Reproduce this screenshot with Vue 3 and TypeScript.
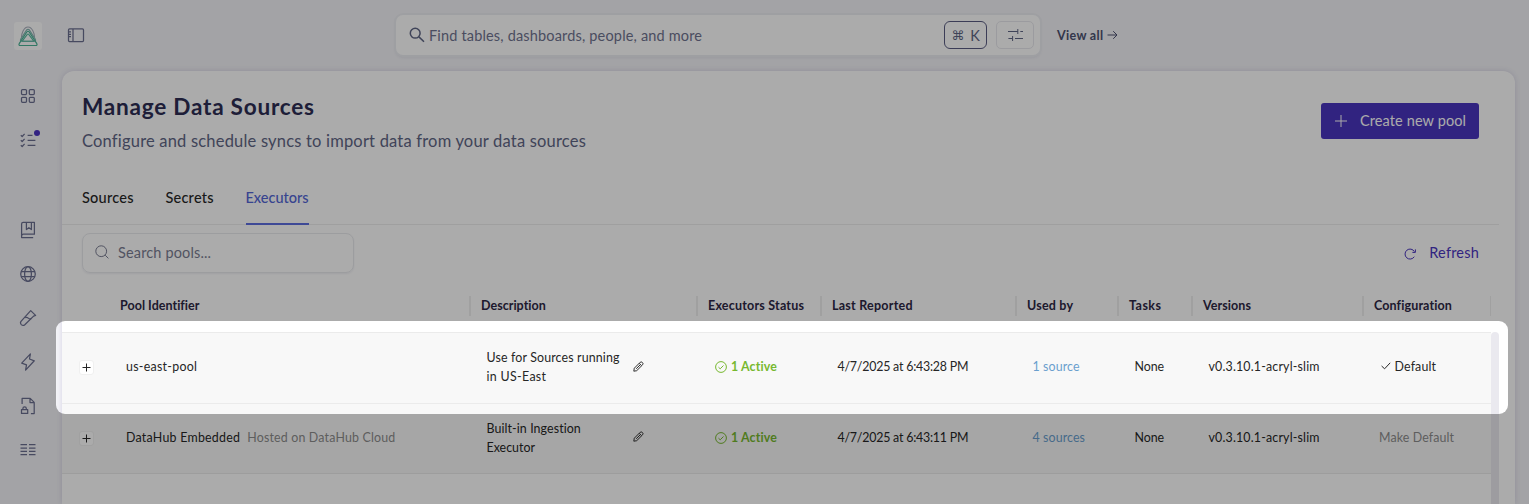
<script setup lang="ts">
import type { Directive } from 'vue'

interface Label { text: string; width: number }
interface PoolRow {
  name: Label
  note?: Label
  description: Label[]
  status: Label
  reported: Label
  sources: Label
  tasks: Label
  version: Label
  isDefault: boolean
  config: Label
}

// Tracks a label out (or in) so that it takes the given width in pixels.
const vFit: Directive<HTMLElement, number> = {
  mounted(el, binding) {
    const count = (el.textContent ?? '').length
    const natural = el.getBoundingClientRect().width
    if (count > 1) el.style.letterSpacing = `${((binding.value - natural) / (count - 1)).toFixed(3)}px`
  },
}

const navTop = ['grid', 'tasks']
const navMain = ['book', 'globe', 'tube', 'bolt', 'file', 'columns']

const tabs = [
  { text: 'Sources', width: 51.5, active: false },
  { text: 'Secrets', width: 48, active: false },
  { text: 'Executors', width: 63, active: true },
]

const headers: Label[] = [
  { text: 'Pool Identifier', width: 79.5 },
  { text: 'Description', width: 65 },
  { text: 'Executors Status', width: 96 },
  { text: 'Last Reported', width: 80.5 },
  { text: 'Used by', width: 46 },
  { text: 'Tasks', width: 32 },
  { text: 'Versions', width: 48 },
  { text: 'Configuration', width: 78 },
]

const rows: PoolRow[] = [
  {
    name: { text: 'us-east-pool', width: 71 },
    description: [{ text: 'Use for Sources running', width: 133 }, { text: 'in US-East', width: 59.5 }],
    status: { text: '1 Active', width: 46 },
    reported: { text: '4/7/2025 at 6:43:28 PM', width: 131 },
    sources: { text: '1 source', width: 47 },
    tasks: { text: 'None', width: 29.5 },
    version: { text: 'v0.3.10.1-acryl-slim', width: 111 },
    isDefault: true,
    config: { text: 'Default', width: 41.5 },
  },
  {
    name: { text: 'DataHub Embedded', width: 114 },
    note: { text: 'Hosted on DataHub Cloud', width: 148 },
    description: [{ text: 'Built-in Ingestion', width: 94.5 }, { text: 'Executor', width: 48.5 }],
    status: { text: '1 Active', width: 46 },
    reported: { text: '4/7/2025 at 6:43:11 PM', width: 131 },
    sources: { text: '4 sources', width: 52.5 },
    tasks: { text: 'None', width: 29.5 },
    version: { text: 'v0.3.10.1-acryl-slim', width: 111 },
    isDefault: false,
    config: { text: 'Make Default', width: 75 },
  },
]
</script>

<template>
  <div class="app">
    <aside class="sidebar">
      <div class="logo">
        <svg width="20" height="22" viewBox="0 0 20 22" fill="none" stroke-width="1.1" stroke-linejoin="round">
          <path d="M3.4 12.5C3.4 9 5.6 2 10 2S16.6 9 16.6 12.5" stroke="#a9b0bd" />
          <path d="M3.6 16.2C2.4 16.2 2.2 15.3 2.6 14.4L8.2 5.6C9.2 4 10.8 4 11.8 5.6L17.4 14.4C17.8 15.3 17.6 16.2 16.4 16.2Z" stroke="#85b5b2" />
          <path d="M2.2 20.5C1 20.5 .7 19.6 1.2 18.7L8.8 7C9.5 6 10.5 6 11.2 7L18.8 18.7C19.3 19.6 19 20.5 17.8 20.5Z" stroke="#4bb396" stroke-width="1.2" />
          <path d="M4.2 16.2L9.1 9.6Q10 8.5 10.9 9.6L15.8 16.2Z" stroke="#58b8a0" />
        </svg>
      </div>
      <nav class="nav">
        <div v-for="n in navTop" :key="n" class="nav-item">
          <svg v-if="n === 'grid'" class="ico" width="16" height="16" viewBox="0 0 16 16">
            <rect x="1.5" y="1.5" width="5" height="5" rx="1" /><rect x="9.3" y="1.5" width="5" height="5" rx="1" />
            <rect x="1.5" y="9.3" width="5" height="5" rx="1" /><rect x="9.3" y="9.3" width="5" height="5" rx="1" />
          </svg>
          <svg v-else class="ico" width="16" height="16" viewBox="0 0 16 16">
            <path d="M.8 3.2L2.2 4.5L4.6 1.9M.8 8.2L2.2 9.5L4.6 6.9M.8 13.2L2.2 14.5L4.6 11.9M7.6 3.3H12.5M7.6 8.3H15.4M7.6 13.4H15.4" />
          </svg>
          <span v-if="n === 'tasks'" class="dot"></span>
        </div>
      </nav>
      <nav class="nav main">
        <div v-for="n in navMain" :key="n" class="nav-item">
          <svg v-if="n === 'book'" class="ico" width="16" height="18" viewBox="0 0 16 18">
            <path d="M1.6 15.2V3Q1.6 1.4 3.2 1.4H14.4V13.2H3.6Q1.6 13.2 1.6 15.2V16.6H13.2M6.4 1.6V8.6L8.9 6.7L11.4 8.6V1.6" />
          </svg>
          <svg v-else-if="n === 'globe'" class="ico" width="16" height="16" viewBox="0 0 16 16">
            <circle cx="8" cy="8" r="7.3" /><ellipse cx="8" cy="8" rx="3.4" ry="7.3" /><path d="M1.2 5.5H14.8M1.2 10.5H14.8" />
          </svg>
          <svg v-else-if="n === 'tube'" class="ico" width="18" height="18" viewBox="0 0 18 18">
            <path d="M11.7 1.6L16.6 6.4L14.6 7.1L5.8 15.7Q4 17.2 2.3 15.6Q.7 13.9 2.2 12.1Z" /><path d="M6.2 8.6Q7.8 7.8 9.3 9.1T12.3 9.4" />
          </svg>
          <svg v-else-if="n === 'bolt'" class="ico" width="16" height="18" viewBox="0 0 16 18">
            <path d="M10.4 .9L9.5 6L14.3 7.8L5.6 17.1L6.5 11.9L1.7 10.1Z" />
          </svg>
          <svg v-else-if="n === 'file'" class="ico" width="16" height="18" viewBox="0 0 16 18">
            <path d="M2.1 7V1.4H10.2L14.2 5.4V16.6H10.9M10 1.6V5.6H14M1.5 12.6H7.7V16.4H1.5ZM2.9 12.4V11.4Q2.9 9.9 4.6 9.9T6.3 11.4V12.4" />
          </svg>
          <svg v-else class="ico" width="16" height="14" viewBox="0 0 16 14">
            <path d="M.5 1.7H7M9 1.7H15.5M.5 5H7M9 5H15.5M.5 8.3H7M9 8.3H15.5M.5 11.6H7M9 11.6H15.5" />
          </svg>
        </div>
      </nav>
    </aside>

    <div class="content">
      <header class="topbar">
        <svg class="ico toggle" width="18" height="16" viewBox="0 0 18 16">
          <rect x="1.5" y="1.9" width="15" height="12.6" rx="1" /><path d="M6 2V14.5M2 4.9H4M2 7.3H4M2 9.7H4" />
        </svg>
        <div class="search">
          <svg class="search-ico" width="16" height="16" viewBox="0 0 16 16"><circle cx="6.2" cy="6.2" r="4.9" /><path d="M9.9 9.9L15 14.8" /></svg>
          <span v-fit="273" class="placeholder">Find tables, dashboards, people, and more</span>
          <span class="kbd"><span class="cmd">⌘</span><span>K</span></span>
          <span class="filter">
            <svg width="17" height="14" viewBox="0 0 17 14"><path d="M1 3.5H10.8M13.3 3.5H16M10.8 1V6M1.4 10.5H5.4M5.6 8V13M8 10.5H16" /></svg>
          </span>
        </div>
        <div class="view-all">
          <span v-fit="46">View all</span>
          <svg width="11" height="10" viewBox="0 0 11 10"><path d="M.5 5H9.8M6.2 1.2L10 5L6.2 8.8" /></svg>
        </div>
      </header>

      <main class="card">
        <div class="card-head">
          <div>
            <h1><span v-fit="232">Manage Data Sources</span></h1>
            <p class="subtitle"><span v-fit="503.5">Configure and schedule syncs to import data from your data sources</span></p>
          </div>
          <button class="create" type="button">
            <svg width="12" height="12" viewBox="0 0 12 12"><path d="M6 0V12M0 6H12" /></svg>
            <span v-fit="106">Create new pool</span>
          </button>
        </div>

        <div class="tabs">
          <div v-for="t in tabs" :key="t.text" class="tab" :class="{ active: t.active }" :style="{ width: t.width + 'px' }">
            <span v-fit="t.width">{{ t.text }}</span>
          </div>
        </div>

        <div class="tools">
          <div class="pool-search">
            <svg width="14" height="14" viewBox="0 0 14 14"><circle cx="6.2" cy="6.2" r="5.4" /><path d="M10.2 10.2L13.4 13.4" /></svg>
            <span v-fit="93">Search pools...</span>
          </div>
          <div class="refresh">
            <svg width="12" height="12" viewBox="0 0 12 12"><path d="M10.3 8.7A5 5 0 1 1 10.4 3.6M11.4 1.4V4.4H8.4" /></svg>
            <span v-fit="49.5">Refresh</span>
          </div>
        </div>

        <div class="table">
          <div class="row head">
            <div class="th"></div>
            <div v-for="h in headers" :key="h.text" class="th divided"><span v-fit="h.width">{{ h.text }}</span></div>
          </div>
          <div class="body">
            <div class="rows">
              <div v-for="r in rows" :key="r.name.text" class="row data">
                <div class="expand-cell">
                  <span class="expand"><svg width="9" height="9" viewBox="0 0 9 9"><path d="M4.5 .5V8.5M.5 4.5H8.5" /></svg></span>
                </div>
                <div class="td name">
                  <span v-fit="r.name.width">{{ r.name.text }}</span>
                  <span v-if="r.note" v-fit="r.note.width" class="note">{{ r.note.text }}</span>
                </div>
                <div class="td desc">
                  <div class="desc-text">
                    <div v-for="d in r.description" :key="d.text"><span v-fit="d.width">{{ d.text }}</span></div>
                  </div>
                  <svg class="pencil" width="11" height="11" viewBox="0 0 11 11"><path d="M.8 10.2L1.3 7.2L7.2 1.3Q8.2 .4 9.4 1.5T9.6 3.8L3.7 9.7ZM6.2 2.3L8.6 4.7M3.2 7.8L7.2 3.8" /></svg>
                </div>
                <div class="td status">
                  <svg width="12" height="12" viewBox="0 0 12 12"><circle cx="6" cy="6" r="5.4" /><path d="M3.5 6.2L5.2 7.8L8.5 4.5" /></svg>
                  <span v-fit="r.status.width">{{ r.status.text }}</span>
                </div>
                <div class="td"><span v-fit="r.reported.width">{{ r.reported.text }}</span></div>
                <div class="td link"><span v-fit="r.sources.width">{{ r.sources.text }}</span></div>
                <div class="td"><span v-fit="r.tasks.width">{{ r.tasks.text }}</span></div>
                <div class="td"><span v-fit="r.version.width">{{ r.version.text }}</span></div>
                <div class="td config" :class="{ muted: !r.isDefault }">
                  <svg v-if="r.isDefault" width="10" height="8" viewBox="0 0 10 8"><path d="M.6 4L3.6 6.8L9.2 .8" /></svg>
                  <span v-fit="r.config.width">{{ r.config.text }}</span>
                </div>
              </div>
            </div>
            <div class="scrollbar"></div>
          </div>
        </div>
      </main>
    </div>

    <div class="spotlight"></div>
  </div>
</template>

<style>
body {
  margin: 0;
  overflow: hidden;
}
</style>

<style scoped>
.app {
  position: relative;
  display: flex;
  width: 1529px;
  height: 504px;
  overflow: hidden;
  box-sizing: border-box;
  background: #f4f4f8;
  font-family: Lato, "Open Sans", sans-serif;
  font-size: 14.5px;
  color: #262626;
  white-space: nowrap;
}
.app * {
  box-sizing: border-box;
}
svg {
  display: block;
  flex: none;
  fill: none;
  stroke: currentColor;
}
.ico {
  color: #6b6f90;
  stroke-width: 1.25;
  stroke-linejoin: round;
}
.sidebar {
  width: 56px;
  flex: none;
  padding-top: 22px;
}
.logo {
  display: flex;
  align-items: center;
  justify-content: center;
  width: 28px;
  height: 28px;
  margin: 0 0 24px 14px;
  border-radius: 3px;
  background: #fff;
}
.nav.main {
  margin-top: 46px;
}
.nav-item {
  position: relative;
  display: flex;
  align-items: center;
  justify-content: center;
  height: 44px;
}
.dot {
  position: absolute;
  left: 34px;
  top: 12px;
  width: 6px;
  height: 6px;
  border-radius: 50%;
  background: #4b34c2;
}
.content {
  flex: 1;
  min-width: 0;
  padding: 0 14px 0 6px;
}
.topbar {
  display: flex;
  align-items: center;
  height: 71px;
  padding: 0 0 1px 5px;
}
.toggle {
  margin: 0 311px 0 0;
}
.search {
  display: flex;
  align-items: center;
  width: 644px;
  height: 40px;
  padding: 0 6px 0 13px;
  border-radius: 7px;
  background: #fff;
  box-shadow: 0 0 0 2px #ecedf2, 0 2px 3px 1px rgba(60, 60, 110, 0.08);
  color: #6f7390;
}
.search-ico {
  margin-right: 4px;
  color: #5f6685;
  stroke-width: 1.5;
}
.kbd {
  display: flex;
  align-items: center;
  justify-content: center;
  gap: 6px;
  width: 43px;
  height: 28px;
  margin-left: auto;
  border: 1px solid #5a5c82;
  border-radius: 6px;
  color: #5f6685;
}
.cmd {
  font-family: "DejaVu Sans", sans-serif;
  font-size: 13px;
}
.filter {
  display: flex;
  align-items: center;
  justify-content: center;
  width: 38px;
  height: 28px;
  margin-left: 9px;
  border: 1px solid #e8e8ee;
  border-radius: 5px;
  color: #5f6685;
}
.view-all {
  display: flex;
  align-items: center;
  gap: 4px;
  margin-left: 17px;
  font-size: 12.5px;
  font-weight: 700;
  color: #4d5170;
}
.card {
  height: 433px;
  border-radius: 12px 12px 0 0;
  background: #fff;
  box-shadow: 0 0 6px rgba(60, 50, 130, 0.16);
}
.card-head {
  display: flex;
  justify-content: space-between;
  height: 101px;
  padding: 22px 36px 0 20px;
}
h1 {
  margin: 0;
  font-size: 22.6px;
  line-height: 28px;
  font-weight: 700;
  color: #2d2e54;
}
.subtitle {
  margin: 8px 0 0;
  font-size: 16.5px;
  line-height: 24px;
  color: #5f6685;
}
.create {
  display: flex;
  align-items: center;
  gap: 13px;
  width: 158px;
  height: 36px;
  margin-top: 10px;
  padding: 0 0 1px 14px;
  border: 0;
  border-radius: 3px;
  background: #4a35bf;
  font: inherit;
  color: #fff;
}
.create svg {
  margin-top: 1px;
}
.tabs {
  display: flex;
  gap: 32px;
  height: 53px;
  width: 1437px;
  padding-left: 20px;
  border-bottom: 1px solid #ededed;
}
.tab {
  height: 53px;
  padding-top: 16px;
  line-height: 20px;
  font-weight: 500;
}
.tab.active {
  border-bottom: 2px solid #5d6de0;
  color: #5366d6;
}
.tools {
  display: flex;
  justify-content: space-between;
  align-items: center;
  height: 55px;
  padding: 1px 36px 0 20px;
}
.pool-search {
  display: flex;
  align-items: center;
  gap: 9px;
  width: 272px;
  height: 40px;
  padding: 0 0 2px 12px;
  border: 1px solid #e9eaee;
  border-radius: 8px;
  box-shadow: 0 1px 2px rgba(33, 23, 95, 0.07);
  color: #7a7d92;
}
.refresh {
  display: flex;
  align-items: center;
  gap: 13px;
  padding-bottom: 2px;
  color: #4a35bf;
}
.refresh svg {
  margin-top: 4px;
}
.row {
  display: grid;
  grid-template-columns: 48px 361px 227px 124px 195px 102px 74px 171px 127px;
}
.head {
  width: 1429px;
  height: 52px;
  align-items: center;
  font-size: 12.5px;
  font-weight: 700;
  color: #2d2745;
}
.th {
  height: 20px;
  padding-left: 10px;
  line-height: 20px;
}
.divided {
  border-right: 2px solid #efefef;
}
.divided:last-child {
  border-right-width: 1px;
}
.body {
  display: flex;
}
.rows {
  width: 1429px;
  border-top: 1px solid #ebebeb;
}
.data {
  height: 71px;
  align-items: center;
  border-bottom: 1px solid #ebebeb;
  background: #f8f8f8;
  font-size: 12.4px;
  line-height: 18.86px;
}
.data:last-child {
  height: 70px;
}
.td {
  display: flex;
  align-items: center;
  padding: 0 0 1px 15.5px;
}
.td.name {
  padding-left: 16px;
}
.td.desc {
  padding-bottom: 0;
}
.note {
  margin-left: 7px;
  color: #8c8c8c;
}
.desc-text {
  width: 146px;
}
.pencil {
  margin-top: -4px;
  stroke-width: 0.95;
}
.td.status {
  gap: 4px;
  padding-left: 17px;
  font-weight: 700;
  color: #77b82f;
}
.link {
  color: #6a9fce;
}
.config svg {
  margin: -3px 4px 0 1px;
}
.td.config.muted {
  padding-left: 15px;
  color: #8c8c8c;
}
.expand {
  display: flex;
  align-items: center;
  justify-content: center;
  width: 15px;
  height: 15px;
  margin: -1px 0 0 17px;
  border: 1px solid #f0f0f0;
  border-radius: 3px;
  background: #fff;
}
.scrollbar {
  width: 8px;
  height: 180px;
  border-radius: 4px;
  background: #eae9ef;
}
.spotlight {
  position: absolute;
  left: 56px;
  top: 321px;
  width: 1452px;
  height: 93px;
  border-radius: 9px;
  box-shadow: 0 0 0 1600px rgba(0, 0, 0, 0.33);
}
</style>
